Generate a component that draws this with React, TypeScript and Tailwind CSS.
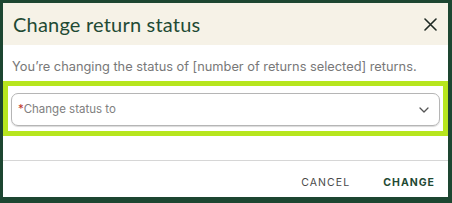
import React from 'react';

const ChevronDown: React.FC = () => (
  <svg width="10" height="6" viewBox="0 0 10 6" fill="none">
    <path d="M1 1l4 4 4-4" stroke="#555" strokeWidth="1.3" strokeLinecap="round" strokeLinejoin="round" />
  </svg>
);

const CloseIcon: React.FC = () => (
  <svg width="13" height="13" viewBox="0 0 13 13" fill="none">
    <path d="M1 1l11 11M12 1L1 12" stroke="#1f2a24" strokeWidth="1.6" strokeLinecap="round" />
  </svg>
);

export default function App() {
  return (
    <div
      className="w-[452px] h-[203px] bg-[#1d4631] pt-[3px] pl-[3px] pr-[4px] pb-[6px]"
      style={{ fontFamily: 'Inter, "Noto Sans", sans-serif' }}
    >
      <div className="flex flex-col h-full bg-white">
        {/* Header */}
        <div className="flex items-center justify-between h-[42px] bg-[#f6f2e7] pl-[10px] pr-[10px]">
          <h2 className="text-[20px] text-[#1f4a34] tracking-[0.2px]" style={{ fontFamily: 'Lato, Inter, sans-serif' }}>
            Change return status
          </h2>
          <button className="flex items-center justify-center w-[16px] h-[16px]">
            <CloseIcon />
          </button>
        </div>

        {/* Body */}
        <p className="mt-[14px] pl-[9px] text-[12.8px] leading-[16px] text-[#787878]">
          You’re changing the status of [number of returns selected] returns.
        </p>

        <div className="mt-[6px] border-[5px] border-[#b7e61e] pt-[7px] pb-[5px] px-[3px]">
          <div className="flex items-center justify-between h-[33px] rounded-[7px] border border-[#b5b5b5] shadow-[0_1px_1px_rgba(0,0,0,0.15)] pl-[6px] pr-[10px]">
            <span className="text-[11.5px] text-[#808080]">
              <span className="text-[#c0392b]">*</span>Change status to
            </span>
            <ChevronDown />
          </div>
        </div>

        {/* Footer */}
        <div className="mt-auto border-t border-[#d6d6d6] h-[37px] flex items-center justify-end gap-[33px] pr-[13px] pt-[7px]">
          <button className="text-[10.5px] tracking-[1.1px] text-[#4a4a4a]">CANCEL</button>
          <button className="text-[10.5px] tracking-[1px] font-bold text-[#1f4a34]">CHANGE</button>
        </div>
      </div>
    </div>
  );
}
